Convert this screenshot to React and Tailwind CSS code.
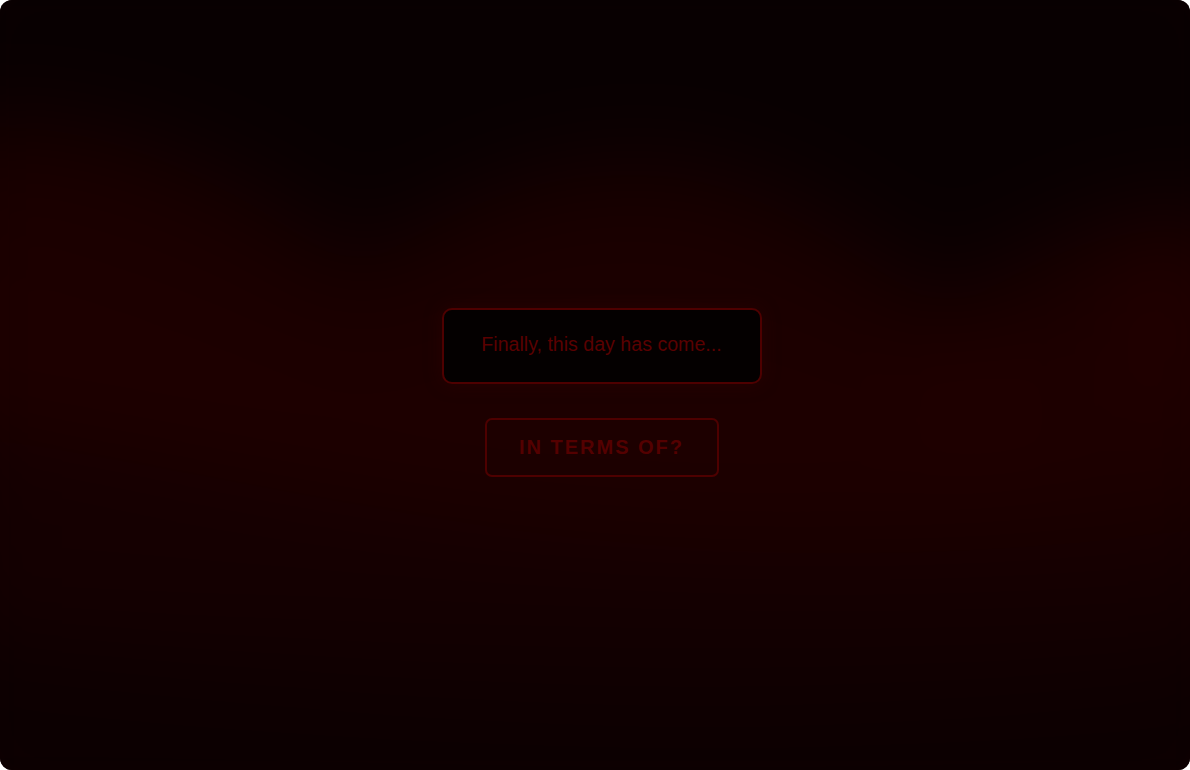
import React from "react";

function Waves() {
  return (
    <svg
      className="absolute -inset-[60px] w-[1310px] h-[890px] blur-[45px]"
      viewBox="-60 -60 1310 890"
    >
      <defs>
        <linearGradient id="fade" x1="0" y1="0" x2="0" y2="1">
          <stop offset="0" stopColor="#070001" />
          <stop offset="0.3" stopColor="#110001" />
          <stop offset="0.7" stopColor="#150001" />
          <stop offset="1" stopColor="#0a0001" />
        </linearGradient>
      </defs>
      <rect x="-60" y="-60" width="1310" height="890" fill="url(#fade)" />
      <path
        d="M-60 130 C120 110 250 200 360 280 C450 200 560 170 650 175 C760 180 860 260 950 320 C1040 250 1120 220 1250 230 L1250 520 C1000 560 800 560 600 540 C400 520 200 470 -60 430 Z"
        fill="#1a0000"
      />
      <path
        d="M-60 220 C150 260 260 330 380 360 C500 300 600 280 700 300 C820 320 900 380 990 380 C1080 360 1150 330 1250 310 L1250 470 C1000 500 800 520 600 510 C400 500 200 460 -60 420 Z"
        fill="#1d0000"
      />
      <path
        d="M-60 -60 L1250 -60 L1250 190 C1100 180 1000 250 950 290 C860 220 760 150 640 150 C540 150 440 210 360 250 C260 170 140 100 -60 110 Z"
        fill="#080001"
      />
      <path
        d="M-60 830 L1250 830 L1250 660 C1000 700 800 720 600 710 C400 700 200 670 -60 640 Z"
        fill="#0c0001"
      />
      <ellipse cx="1170" cy="320" rx="60" ry="90" fill="#210000" />
      <ellipse cx="980" cy="400" rx="90" ry="60" fill="#1f0000" />
    </svg>
  );
}

export default function App() {
  return (
    <div className="w-[1190px] h-[770px] bg-white">
      <div className="relative w-full h-full rounded-xl overflow-hidden bg-[#120001]">
        <Waves />
        <main className="relative h-full flex flex-col items-center pt-[308px] pl-[13px] font-['Liberation_Sans',Arial,sans-serif]">
          <div className="w-[320px] h-[76px] flex items-center justify-center rounded-[10px] border-2 border-[#4e0000] bg-[#040000] shadow-[0_0_18px_rgba(60,0,0,0.35)]">
            <p className="text-[19.6px] text-[#5a0000] -mt-[2px]">Finally, this day has come...</p>
          </div>
          <button className="mt-[34px] w-[234px] h-[59px] flex items-center justify-center rounded-[7px] border-2 border-[#4e0000] bg-transparent">
            <span className="text-[20px] font-bold tracking-[2px] text-[#540000] -mt-[2px]">IN TERMS OF?</span>
          </button>
        </main>
      </div>
    </div>
  );
}
